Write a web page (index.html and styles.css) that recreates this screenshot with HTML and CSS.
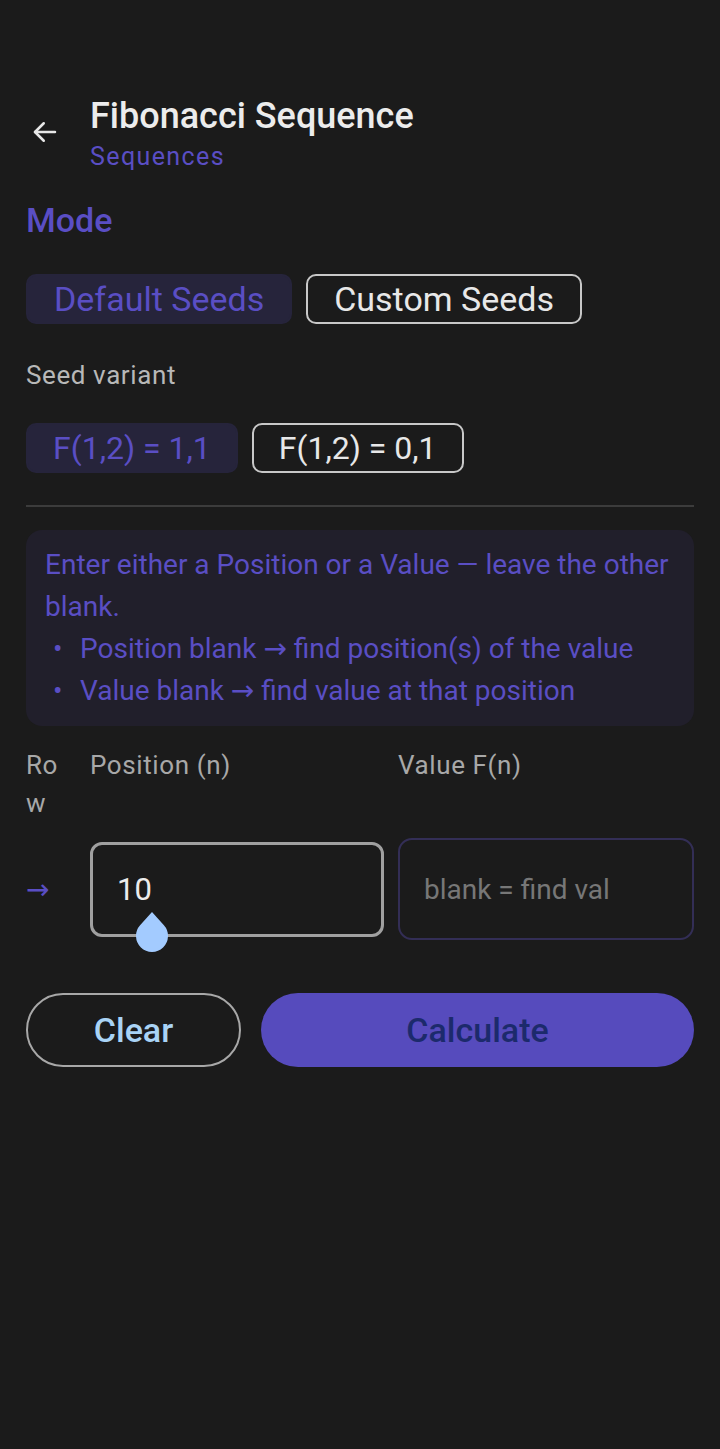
FILE: index.html
```html
<!DOCTYPE html>
<html lang="en">
<head>
    <meta charset="UTF-8">
    <meta name="viewport" content="width=device-width, initial-scale=1.0">
    <title>Fibonacci Sequence</title>
    <link rel="stylesheet" href="styles.css">
</head>
<body>
    <div class="screen">
        <div class="topbar">
            <button class="back-btn" aria-label="Back">
                <svg width="30" height="30" viewBox="0 0 24 24" fill="none" stroke="#e8e8e8" stroke-width="2" stroke-linecap="round" stroke-linejoin="round">
                    <path d="M20 12H4"/>
                    <path d="M11 5l-7 7 7 7"/>
                </svg>
            </button>
            <div class="titles">
                <h1>Fibonacci Sequence</h1>
                <div class="subtitle">Sequences</div>
            </div>
        </div>

        <h2 class="section-title">Mode</h2>

        <div class="chip-row mode-row">
            <button class="chip selected">Default Seeds</button>
            <button class="chip">Custom Seeds</button>
        </div>

        <div class="field-label">Seed variant</div>

        <div class="chip-row variant-row">
            <button class="chip selected">F(1,2) = 1,1</button>
            <button class="chip">F(1,2) = 0,1</button>
        </div>

        <hr class="divider">

        <div class="info-box">
            <p>Enter either a Position or a Value — leave the other blank.</p>
            <ul>
                <li>Position blank <span class="arr">→</span> find position(s) of the value</li>
                <li>Value blank <span class="arr">→</span> find value at that position</li>
            </ul>
        </div>

        <div class="calc-grid">
            <div class="col-label row-label">Row</div>
            <div class="col-label">Position (n)</div>
            <div class="col-label">Value F(n)</div>

            <div class="row-arrow">→</div>
            <div class="input-wrap">
                <input type="text" class="cell-input active" value="10">
                <svg class="cursor-handle" width="32" height="40" viewBox="0 0 32 40">
                    <path d="M16 0 L27.93 13.33 A16 16 0 1 1 4.07 13.33 Z" fill="#a3cbff"/>
                </svg>
            </div>
            <div class="input-wrap">
                <input type="text" class="cell-input" placeholder="blank = find val">
            </div>
        </div>

        <div class="actions">
            <button class="btn btn-clear">Clear</button>
            <button class="btn btn-calc">Calculate</button>
        </div>
    </div>
</body>
</html>
```

FILE: styles.css
```css
* {
    margin: 0;
    padding: 0;
    box-sizing: border-box;
    font-family: Roboto, "Noto Sans", sans-serif;
}

body {
    background-color: #1b1b1b;
    color: #e8e8e8;
}

.screen {
    padding: 96px 26px 40px;
}

/* header */
.topbar {
    display: flex;
    align-items: flex-start;
}

.back-btn {
    background: none;
    border: none;
    width: 64px;
    padding: 21px 0 0 4px;
    display: flex;
}

.titles h1 {
    font-size: 36px;
    font-weight: 500;
    line-height: 40px;
    color: #ececec;
}

.subtitle {
    font-size: 25px;
    line-height: 30px;
    letter-spacing: 1.4px;
    color: #5a4ec4;
    margin-top: 6px;
}

.section-title {
    font-size: 34px;
    font-weight: 500;
    color: #5a4ec4;
    line-height: 40px;
    margin-top: 28px;
}

/* chips */
.chip-row {
    display: flex;
    gap: 14px;
}

.mode-row {
    margin-top: 34px;
}

.variant-row {
    margin-top: 33px;
}

.chip {
    height: 50px;
    padding: 0 26px;
    font-size: 34px;
    border-radius: 10px;
    background: transparent;
    border: 2px solid #c8c8c8;
    color: #e8e8e8;
}

.variant-row .chip {
    font-size: 32px;
    padding: 0 25px;
}

.chip.selected {
    background-color: #26243b;
    border-color: #26243b;
    color: #5a4ec4;
}

.field-label {
    font-size: 26px;
    line-height: 30px;
    color: #b8b8b8;
    letter-spacing: 0.6px;
    margin-top: 36px;
}

.divider {
    border: none;
    border-top: 2px solid #3c3c3c;
    margin-top: 32px;
}

/* info */
.info-box {
    margin-top: 23px;
    background-color: #211f2b;
    border-radius: 16px;
    padding: 14px 10px 14px 19px;
    color: #5a4ec4;
    font-size: 28px;
    line-height: 42px;
}

.info-box ul {
    list-style: none;
    padding-left: 8px;
}

.info-box li::before {
    content: "•";
    display: inline-block;
    width: 27px;
}

.arr {
    font-family: "DejaVu Sans", sans-serif;
    font-size: 28px;
}

/* position / value grid */
.calc-grid {
    display: grid;
    grid-template-columns: 50px 294px 1fr;
    column-gap: 14px;
    row-gap: 16px;
    margin-top: 20px;
    align-items: center;
}

.col-label {
    align-self: start;
    font-size: 26px;
    line-height: 38px;
    color: #a8a8a8;
    letter-spacing: 0.6px;
}

.row-label {
    width: 38px;
    word-break: break-all;
}

.row-arrow {
    color: #5a4ec4;
    font-family: "DejaVu Sans", sans-serif;
    font-size: 28px;
}

.input-wrap {
    position: relative;
}

.cell-input {
    width: 100%;
    height: 102px;
    background: transparent;
    border: 2px solid #332e56;
    border-radius: 14px;
    padding: 0 24px;
    font-size: 28px;
    color: #ececec;
    outline: none;
}

.cell-input::placeholder {
    color: #777;
}

.cell-input.active {
    height: 95px;
    border: 3px solid #a0a0a0;
    border-radius: 12px;
    font-size: 31px;
}

/* text cursor handle below the caret */
.cursor-handle {
    position: absolute;
    left: 46px;
    top: 70px;
}

/* buttons */
.actions {
    display: grid;
    grid-template-columns: 215px 1fr;
    gap: 20px;
    margin-top: 53px;
}

.btn {
    height: 74px;
    border-radius: 37px;
    font-size: 34px;
    font-weight: 500;
}

.btn-clear {
    background: transparent;
    border: 2px solid #a8a8a8;
    color: #a9d3f5;
}

.btn-calc {
    background-color: #564bbd;
    border: none;
    color: #1c2a6c;
}
```
